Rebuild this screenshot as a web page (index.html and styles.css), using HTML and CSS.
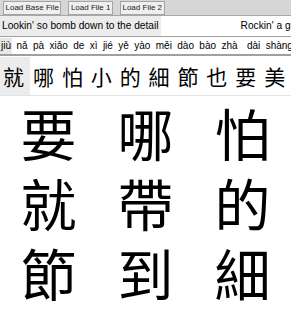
FILE: index.html
```html
<!DOCTYPE html>
<html>
<head>
<meta charset="utf-8">
<link rel="stylesheet" href="styles.css">
</head>
<body>
<div class="toolbar">
  <button class="btn">Load Base File</button>
  <button class="btn">Load File 1</button>
  <button class="btn">Load File 2</button>
</div>
<div class="lyrics">
  <span class="seg active">Lookin' so bomb down to the detail</span>
  <span class="seg">Rockin' a gold chain</span>
</div>
<div class="pinyin">
  <span class="py active">jiù</span><span class="py">nǎ</span><span class="py">pà</span><span class="py">xiǎo</span><span class="py">de</span><span class="py">xì</span><span class="py">jié</span><span class="py">yě</span><span class="py">yào</span><span class="py">měi</span><span class="py">dào</span><span class="py">bào</span><span class="py">zhà</span><span class="py gap">dài</span><span class="py">shàng</span>
</div>
<div class="chars">
  <span class="ch active">就</span><span class="ch">哪</span><span class="ch">怕</span><span class="ch">小</span><span class="ch">的</span><span class="ch">細</span><span class="ch">節</span><span class="ch">也</span><span class="ch">要</span><span class="ch">美</span>
</div>
<div class="grid">
  <span class="big">要</span><span class="big">哪</span><span class="big">怕</span>
  <span class="big">就</span><span class="big">帶</span><span class="big">的</span>
  <span class="big">節</span><span class="big">到</span><span class="big">細</span>
</div>
</body>
</html>
```
FILE: styles.css
```css
html, body {
  margin: 0;
  padding: 0;
  background: #ffffff;
  width: 291px;
  height: 309px;
  overflow: hidden;
  font-family: "Liberation Sans", Arial, sans-serif;
}
.toolbar {
  display: flex;
  gap: 7px;
  padding: 1px 3px 0;
  height: 16px;
  box-sizing: border-box;
  background: #d6d6d6;
  border-bottom: 1px solid #a8a8a8;
}
.btn {
  margin: 0;
  padding: 0 1.5px;
  height: 14px;
  font-family: "Liberation Sans", Arial, sans-serif;
  font-size: 8px;
  line-height: 12px;
  color: #222;
  background: #efefef;
  border: 1px solid #a4a4a4;
  border-radius: 0;
}
.lyrics {
  display: flex;
  white-space: nowrap;
  overflow: hidden;
  height: 20px;
  border-bottom: 1px solid #a0a0a0;
  font-size: 10.2px;
  line-height: 20px;
  color: #000;
}
.seg {
  padding: 0 2px;
}
.seg.active {
  background: #ececec;
}
.seg + .seg {
  margin-left: 78px;
}
.pinyin {
  display: flex;
  white-space: nowrap;
  overflow: hidden;
  height: 16px;
  font-size: 10px;
  line-height: 16px;
  color: #000;
  border-bottom: 2px solid #a0a0a0;
  padding-top: 1px;
  gap: 3.4px;
}
.py {
  padding: 0 1px;
}
.py.active {
  background: #e8e8e8;
}
.py.gap {
  margin-left: 4px;
}
.chars {
  display: flex;
  white-space: nowrap;
  overflow: hidden;
  height: 40px;
  padding-top: 1px;
  box-sizing: border-box;
  border-bottom: 1px solid #e4e4e4;
  font-family: "Noto Sans CJK TC", "Noto Sans CJK SC", sans-serif;
  font-size: 21px;
  line-height: 38px;
  color: #000;
}
.ch {
  width: 28.9px;
  flex: none;
  padding-left: 3px;
  box-sizing: border-box;
}
.ch.active {
  width: 30px;
  background: #ececec;
}
.grid {
  display: grid;
  grid-template-columns: repeat(3, 97px);
  grid-auto-rows: 70px;
  padding-top: 1px;
  font-family: "Noto Sans CJK TC", "Noto Sans CJK SC", sans-serif;
  font-size: 56px;
  line-height: 70px;
  color: #000;
}
.big {
  text-align: center;
}
```
